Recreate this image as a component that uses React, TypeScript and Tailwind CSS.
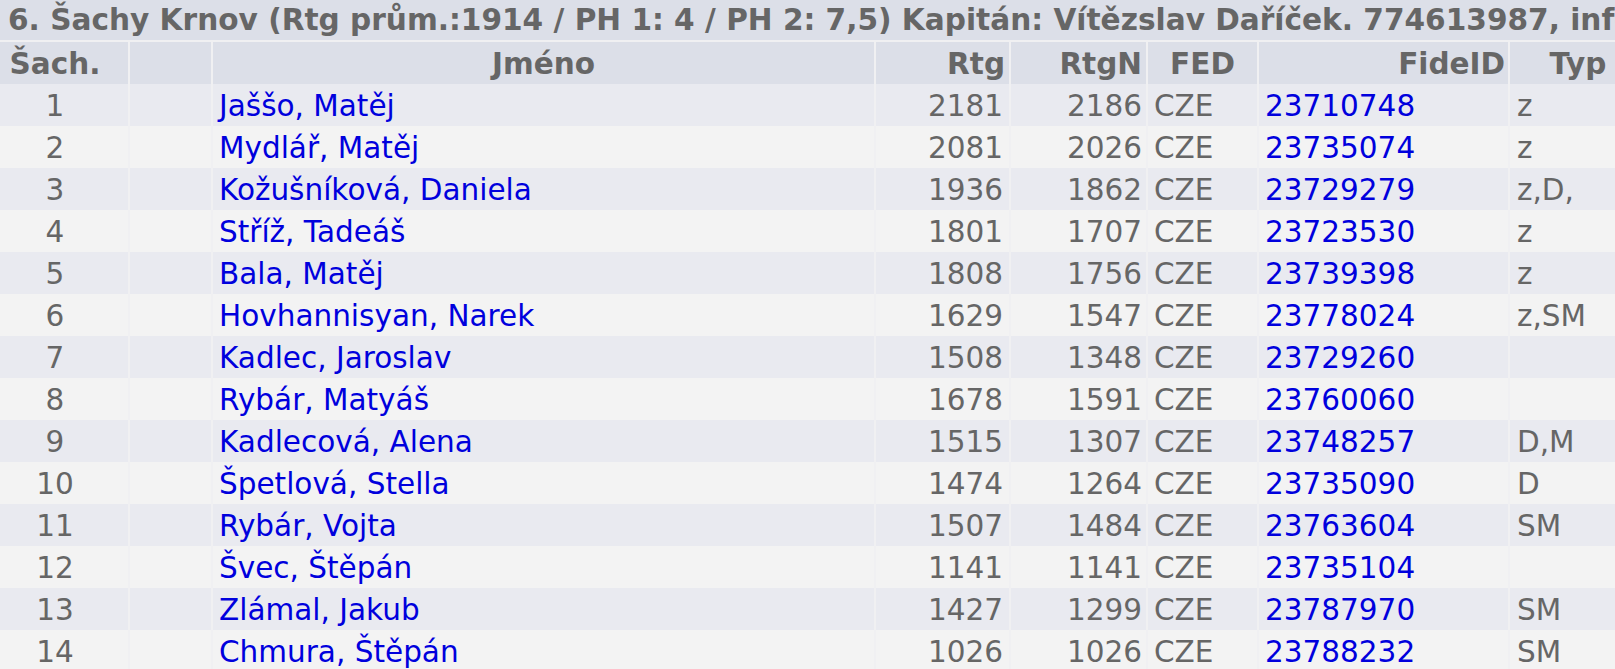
import React from "react";

const players = [
  { no: 1, name: "Jaššo, Matěj", rtg: 2181, rtgN: 2186, fed: "CZE", fide: "23710748", typ: "z" },
  { no: 2, name: "Mydlář, Matěj", rtg: 2081, rtgN: 2026, fed: "CZE", fide: "23735074", typ: "z" },
  { no: 3, name: "Kožušníková, Daniela", rtg: 1936, rtgN: 1862, fed: "CZE", fide: "23729279", typ: "z,D," },
  { no: 4, name: "Stříž, Tadeáš", rtg: 1801, rtgN: 1707, fed: "CZE", fide: "23723530", typ: "z" },
  { no: 5, name: "Bala, Matěj", rtg: 1808, rtgN: 1756, fed: "CZE", fide: "23739398", typ: "z" },
  { no: 6, name: "Hovhannisyan, Narek", rtg: 1629, rtgN: 1547, fed: "CZE", fide: "23778024", typ: "z,SM" },
  { no: 7, name: "Kadlec, Jaroslav", rtg: 1508, rtgN: 1348, fed: "CZE", fide: "23729260", typ: "" },
  { no: 8, name: "Rybár, Matyáš", rtg: 1678, rtgN: 1591, fed: "CZE", fide: "23760060", typ: "" },
  { no: 9, name: "Kadlecová, Alena", rtg: 1515, rtgN: 1307, fed: "CZE", fide: "23748257", typ: "D,M" },
  { no: 10, name: "Špetlová, Stella", rtg: 1474, rtgN: 1264, fed: "CZE", fide: "23735090", typ: "D" },
  { no: 11, name: "Rybár, Vojta", rtg: 1507, rtgN: 1484, fed: "CZE", fide: "23763604", typ: "SM" },
  { no: 12, name: "Švec, Štěpán", rtg: 1141, rtgN: 1141, fed: "CZE", fide: "23735104", typ: "" },
  { no: 13, name: "Zlámal, Jakub", rtg: 1427, rtgN: 1299, fed: "CZE", fide: "23787970", typ: "SM" },
  { no: 14, name: "Chmura, Štěpán", rtg: 1026, rtgN: 1026, fed: "CZE", fide: "23788232", typ: "SM" },
];

const cols = "grid grid-cols-[128px_81px_661px_133px_135px_109px_249px_136px] gap-[2px]";

export default function App() {
  return (
    <main className="w-[1615px] h-[669px] overflow-hidden bg-[#f0f0f2] font-['DejaVu_Sans',Verdana,sans-serif] text-[#666]">
      <div className="w-[1650px] flex flex-col gap-[2px]">
        {/* team title */}
        <div className="h-[40px] bg-[#dcdfe8] flex items-center pl-[8px] whitespace-nowrap overflow-hidden text-[29.6px] font-bold">
          6. Šachy Krnov (Rtg prům.:1914 / PH 1: 4 / PH 2: 7,5) Kapitán: Vítězslav Daříček. 774613987, info
        </div>

        {/* header */}
        <div className={`${cols} h-[40px] text-[29.5px] font-bold`}>
          <div className="bg-[#dcdfe8] flex items-center justify-center pr-[18px]">Šach.</div>
          <div className="bg-[#dcdfe8]" />
          <div className="bg-[#dcdfe8] flex items-center justify-center">Jméno</div>
          <div className="bg-[#dcdfe8] flex items-center justify-end pr-[4px]">Rtg</div>
          <div className="bg-[#dcdfe8] flex items-center justify-end pr-[4px]">RtgN</div>
          <div className="bg-[#dcdfe8] flex items-center justify-center">FED</div>
          <div className="bg-[#dcdfe8] flex items-center justify-end pr-[3px]">FideID</div>
          <div className="bg-[#dcdfe8] flex items-center justify-center">Typ</div>
        </div>

        {/* rows */}
        {players.map((p, i) => {
          const bg = i % 2 === 0 ? "bg-[#e9eaf0]" : "bg-[#f3f3f3]";
          return (
            <div key={p.no} className={`${cols} h-[40px] text-[29.5px] whitespace-nowrap`}>
              <div className={`${bg} flex items-center justify-center pr-[18px]`}>{p.no}</div>
              <div className={bg} />
              <div className={`${bg} flex items-center pl-[6px] text-[#0000dd]`}>{p.name}</div>
              <div className={`${bg} flex items-center justify-end pr-[6px]`}>{p.rtg}</div>
              <div className={`${bg} flex items-center justify-end pr-[4px]`}>{p.rtgN}</div>
              <div className={`${bg} flex items-center pl-[6px]`}>{p.fed}</div>
              <div className={`${bg} flex items-center pl-[6px] text-[#0000dd]`}>{p.fide}</div>
              <div className={`${bg} flex items-center pl-[7px]`}>{p.typ}</div>
            </div>
          );
        })}
      </div>
    </main>
  );
}
